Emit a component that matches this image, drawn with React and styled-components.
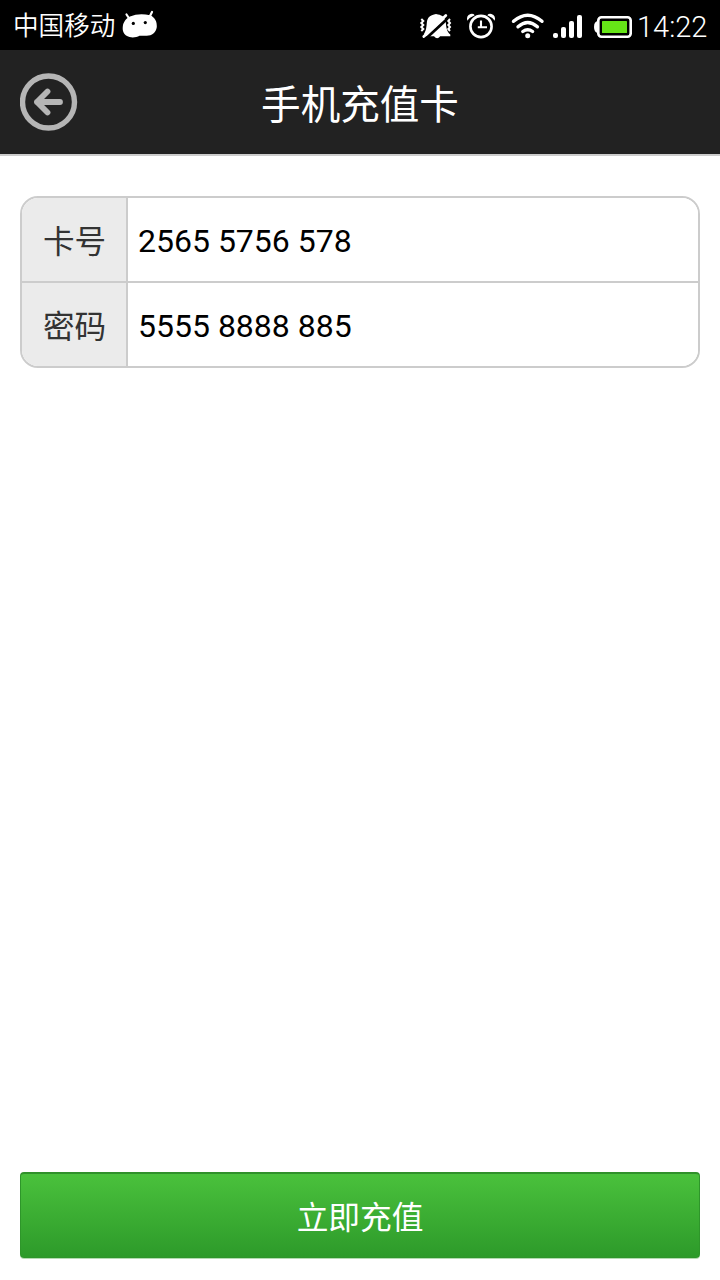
import { useState } from 'react';
import styled, { createGlobalStyle } from 'styled-components';

export default function App() {
  const [card, setCard] = useState('2565 5756 578');
  const [password, setPassword] = useState('5555 8888 885');

  return (
    <>
      <GlobalStyle />
      <Screen>
        <StatusBar>
          <Carrier>中国移动</Carrier>
          <DroidIcon />
          <StatusIcons />
          <Clock>14:22</Clock>
        </StatusBar>
        <Header>
          <BackButton aria-label="返回">
            <BackIcon />
          </BackButton>
          <Title>手机充值卡</Title>
        </Header>
        <Main>
          <Form>
            <Row>
              <Label htmlFor="card">卡号</Label>
              <Input id="card" value={card} onChange={(e) => setCard(e.target.value)} />
            </Row>
            <Row>
              <Label htmlFor="password">密码</Label>
              <Input id="password" value={password} onChange={(e) => setPassword(e.target.value)} />
            </Row>
          </Form>
          <Submit>立即充值</Submit>
        </Main>
      </Screen>
    </>
  );
}

function DroidIcon() {
  return (
    <Droid viewBox="0 0 36 28">
      <path d="M4.5 4.5L7.5 9M30 2L27.5 7" stroke="#fff" strokeWidth="2.2" strokeLinecap="round" />
      <path
        d="M8 6.5Q17 2.6 28 5.2C33 7 35.2 12 34.8 17C34 23 29.5 26 24 25.7C21 26 19.5 25.5 17.5 25.8C14 27.8 8 28 5 26C1.5 24 .3 20.5 .8 16.5C1.3 12 4 8.5 8 6.5Z"
        fill="#fff"
      />
      <circle cx="11.3" cy="13.4" r="1.6" fill="#000" />
      <circle cx="23.3" cy="12.6" r="1.6" fill="#000" />
    </Droid>
  );
}

function StatusIcons() {
  return (
    <Icons viewBox="0 0 216 50" fill="none">
      {/* muted bell */}
      <path
        d="M8 34C11.2 29 10.4 23 11.3 20C12.4 16.5 15 15 18 14.4Q20 13.4 22 14.4C26.5 15 29.3 18 29.8 22C30.3 28 31 32 34.3 34.5V36.2H24.2Q21.2 40.4 18 36.2H10Z"
        fill="#fff"
      />
      <path d="M8.4 40L34.9 15.5" stroke="#000" strokeWidth="2.8" />
      <path d="M7.8 36.6L29.8 15.4" stroke="#fff" strokeWidth="2.8" strokeLinecap="round" />
      <path
        d="M5.3 19L7.3 21L5.3 23L7.3 25L5.3 27L7.3 29L5.3 31M34 19L32.3 21L34 23L32.3 25L34 27L32.3 29L34 31"
        stroke="#fff"
        strokeWidth="2"
      />
      {/* alarm */}
      <circle cx="65" cy="26.5" r="10.6" stroke="#fff" strokeWidth="2.6" />
      <path d="M65 20.5V27.3H71M65 27.3H61.8" stroke="#fff" strokeWidth="2.1" />
      <path
        d="M51.3 20.8Q49.9 15.6 54.5 14Q57.4 13.3 58.7 15.3Q53.7 17.3 51.3 20.8ZM78.7 20.8Q80.1 15.6 75.5 14Q72.6 13.3 71.3 15.3Q76.3 17.3 78.7 20.8Z"
        fill="#fff"
      />
      {/* wifi */}
      <path
        d="M97.5 21.3Q111.7 9.2 126 21.3M102 26.8Q111.7 18.4 121.4 26.8M106.8 31.5Q111.7 27.8 116.6 31.5"
        stroke="#fff"
        strokeWidth="3.4"
        strokeLinecap="round"
      />
      <circle cx="111.7" cy="35.7" r="2.5" fill="#fff" />
      {/* signal */}
      <g fill="#fff">
        <rect x="137" y="33" width="5" height="5" rx="2" />
        <rect x="145" y="27" width="5" height="11" rx="2" />
        <rect x="153" y="21" width="5" height="17" rx="2" />
        <rect x="161" y="15" width="5" height="23" rx="2" />
      </g>
      {/* battery */}
      <path d="M182 21Q178 21.5 178 27Q178 32.5 182 33Z" fill="#fff" />
      <rect x="182.3" y="17.3" width="32.4" height="19.4" rx="3.2" stroke="#fff" strokeWidth="2.6" />
      <rect x="186" y="21" width="25" height="12" rx=".6" fill="#66e517" />
    </Icons>
  );
}

function BackIcon() {
  return (
    <svg width="58" height="58" viewBox="0 0 58 58" fill="none" stroke="#b5b5b5">
      <circle cx="28.5" cy="29" r="26" strokeWidth="5.4" />
      <path d="M40 29H17M27.5 18.5L17 29L27.5 39.5" strokeWidth="5.8" strokeLinecap="round" strokeLinejoin="round" />
    </svg>
  );
}

const GlobalStyle = createGlobalStyle`
  * {
    box-sizing: border-box;
  }

  body {
    margin: 0;
    background: #fff;
    font-family: Roboto, 'Noto Sans CJK SC', sans-serif;
  }
`;

const Screen = styled.div`
  display: flex;
  flex-direction: column;
  height: 100vh;
  overflow: hidden;
`;

const StatusBar = styled.div`
  display: flex;
  align-items: center;
  flex: none;
  height: 50px;
  padding: 0 11px 0 13px;
  background: #000;
  color: #fff;
`;

const Carrier = styled.span`
  width: 109px;
  font-family: 'Noto Sans CJK SC', sans-serif;
  font-size: 25.6px;
  font-weight: 350;
  line-height: 48px;
  padding-bottom: 2px;
  white-space: nowrap;
`;

const Droid = styled.svg`
  width: 36px;
  height: 28px;
  margin-bottom: 2px;
`;

const Icons = styled.svg`
  flex: none;
  width: 216px;
  height: 50px;
  margin-left: auto;
`;

const Clock = styled.span`
  flex: none;
  width: 77px;
  padding: 3px 0 0 5px;
  font-size: 29px;
  font-weight: 300;
  line-height: 50px;
  white-space: nowrap;
`;

const Header = styled.header`
  display: grid;
  grid-template-columns: 58px 1fr 58px;
  align-items: center;
  flex: none;
  height: 106px;
  padding: 0 20px;
  background: #222;
  border-bottom: 2px solid #ccc;
`;

const BackButton = styled.button`
  display: flex;
  padding: 0;
  border: 0;
  background: none;
`;

const Title = styled.h1`
  margin: 0;
  color: #fff;
  font-family: 'Noto Sans CJK SC', sans-serif;
  font-size: 39.6px;
  font-weight: 400;
  line-height: 104px;
  text-align: center;
`;

const Main = styled.main`
  display: flex;
  flex-direction: column;
  justify-content: space-between;
  flex: 1;
  padding: 40px 20px 22px;
`;

const Form = styled.div`
  border: 2px solid #ccc;
  border-radius: 18px;
  overflow: hidden;
`;

const Row = styled.div`
  display: flex;
  height: 83px;

  & + & {
    height: 85px;
    border-top: 2px solid #ccc;
  }
`;

const Label = styled.label`
  flex: none;
  width: 106px;
  padding-left: 21px;
  border-right: 2px solid #ccc;
  background: #ebebeb;
  color: #333;
  font-family: 'Noto Sans CJK SC', sans-serif;
  font-size: 31.6px;
  line-height: 82px;
`;

const Input = styled.input`
  flex: 1;
  min-width: 0;
  padding: 3px 10px 0;
  border: 0;
  outline: 0;
  background: #fff;
  color: #000;
  font-family: Roboto, sans-serif;
  font-size: 32px;
`;

const Submit = styled.button`
  height: 86px;
  padding: 0 0 1px;
  border: 1px solid #2e962a;
  border-top: 2px solid #30902a;
  border-radius: 4px;
  background: linear-gradient(#4ac13c, #2d9a2a);
  box-shadow: 0 1px 0 #b4dcb2;
  color: #fff;
  font-family: 'Noto Sans CJK SC', sans-serif;
  font-size: 31.7px;
`;
